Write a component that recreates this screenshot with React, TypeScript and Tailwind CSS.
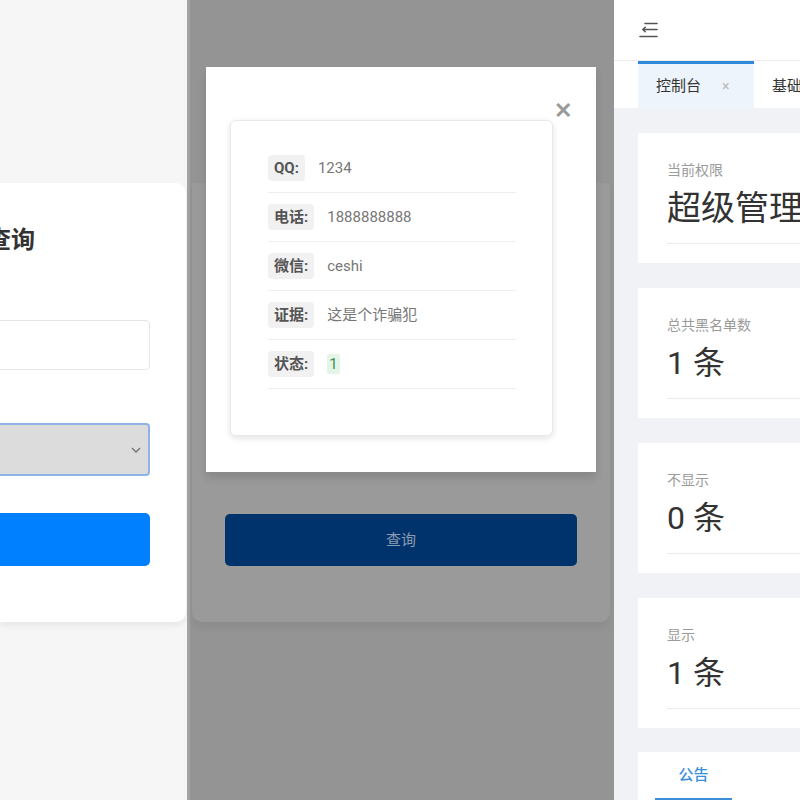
import React from "react";

const font = { fontFamily: 'Roboto, "Noto Sans CJK SC", sans-serif' };

function Row({ label, value, green }: { label: string; value: string; green?: boolean }) {
  return (
    <div className="flex h-[49px] flex-col">
      <div className="flex h-[48px] items-center">
        <span className="rounded-[4px] bg-[#f1f1f1] px-[6px] py-[3px] text-[15px] font-bold leading-[20px] text-[#555]">
          {label}
        </span>
        {green ? (
          <span className="ml-[13px] rounded-[2px] bg-[#e3f5e6] px-[2px] text-[15px] leading-[20px] text-[#3f8f52]">{value}</span>
        ) : (
          <span className="ml-[13px] text-[15px] leading-[20px] text-[#777]">{value}</span>
        )}
      </div>
      <div className="h-px w-[248px] bg-[#efefef]" />
    </div>
  );
}

function StatCard({ label, value, big }: { label: string; value: string; big?: boolean }) {
  return (
    <div className="h-[130px] w-[200px] shrink-0 bg-white pl-[29px] pt-[27px]">
      <div className="text-[14px] leading-[20px] text-[#9a9a9a]">{label}</div>
      <div className={`mt-[8px] whitespace-nowrap leading-[40px] text-[#333] ${big ? "text-[34px]" : "text-[32px]"}`}>{value}</div>
      <div className="mt-[15px] h-px w-full bg-[#ececec]" />
    </div>
  );
}

export default function App() {
  return (
    <div className="flex h-[800px] w-[800px] overflow-hidden bg-white" style={font}>
      {/* Left panel */}
      <div className="flex h-full w-[187px] shrink-0 flex-col bg-[#f6f6f6]">
        <div className="mt-[183px] h-[439px] w-[186px] overflow-hidden rounded-r-[10px] bg-white pt-[40px] shadow-[0_4px_6px_rgba(0,0,0,0.06)]">
          <div className="-ml-[13px] whitespace-nowrap text-[24px] font-bold leading-[34px] text-[#333]">查询</div>
          <div className="-ml-[10px] mt-[63px] h-[50px] w-[160px] rounded-[4px] border border-[#e6e6e6] bg-white" />
          <div className="-ml-[10px] mt-[53px] flex h-[53px] w-[160px] items-center justify-end rounded-[4px] border-2 border-[#8fb4e3] bg-[#dcdcdc] pr-[6px]">
            <svg width="12" height="8" viewBox="0 0 12 8" fill="none" stroke="#777" strokeWidth="1.5">
              <path d="M2 2l4 4 4-4" />
            </svg>
          </div>
          <div className="-ml-[10px] mt-[37px] h-[53px] w-[160px] rounded-[5px] bg-[#0080ff]" />
        </div>
      </div>

      {/* Middle panel (overlay) */}
      <div className="relative h-full w-[427px] shrink-0 border-l-[3px] border-[#a3a3a3] bg-[#949494]">
        <div className="ml-[2px] mt-[183px] flex h-[439px] w-[418px] flex-col rounded-b-[10px] bg-[#9a9a9a] px-[33px] pt-[331px] shadow-[0_6px_6px_rgba(0,0,0,0.05)]">
          <div className="flex h-[52px] w-[352px] items-center justify-center rounded-[5px] bg-[#00336b] text-[15px] text-[#8d9bb2]">
            查询
          </div>
        </div>
        {/* Modal */}
        <div className="absolute left-[16px] top-[67px] h-[405px] w-[390px] bg-white px-[24px] pt-[53px] shadow-[0_6px_8px_rgba(0,0,0,0.12)]">
          <div className="absolute right-[24px] top-[34px] text-[22px] font-bold leading-[20px] text-[#9a9a9a]">✕</div>
          <div className="h-[316px] w-[323px] rounded-[6px] border border-[#e9e9e9] bg-white pl-[37px] pt-[23px] shadow-[0_2px_6px_rgba(0,0,0,0.12)]">
            <Row label="QQ:" value="1234" />
            <Row label="电话:" value="1888888888" />
            <Row label="微信:" value="ceshi" />
            <Row label="证据:" value="这是个诈骗犯" />
            <Row label="状态:" value="1" green />
          </div>
        </div>
      </div>

      {/* Right panel */}
      <div className="flex h-full min-w-0 flex-1 flex-col overflow-hidden bg-[#f0f2f5]">
        <div className="flex h-[61px] shrink-0 items-center border-b border-[#ececec] bg-white pl-[25px]">
          <svg width="19" height="18" viewBox="0 0 19 18" fill="none" stroke="#555" strokeWidth="1.6" strokeLinecap="round">
            <path d="M6 2.5h12" />
            <path d="M4 8.5h14" />
            <path d="M4 8.5l2.2-2.2M4 8.5l2.2 2.2" />
            <path d="M1 15.5h17" />
          </svg>
        </div>
        <div className="flex h-[47px] shrink-0 items-stretch bg-white pl-[24px]">
          <div className="flex w-[116px] shrink-0 items-center border-t-[3px] border-[#2e8bd9] bg-[#eef4fb] pl-[18px]">
            <span className="text-[15px] text-[#333]">控制台</span>
            <span className="ml-[21px] text-[14px] text-[#bbb]">×</span>
          </div>
          <div className="flex items-center whitespace-nowrap pl-[18px] pt-[3px] text-[15px] text-[#333]">基础设置</div>
        </div>
        <div className="flex flex-col gap-[25px] pl-[24px] pt-[25px]">
          <StatCard label="当前权限" value="超级管理员" big />
          <StatCard label="总共黑名单数" value="1 条" />
          <StatCard label="不显示" value="0 条" />
          <StatCard label="显示" value="1 条" />
          <div className="-mt-[1px] h-[60px] w-[200px] shrink-0 bg-white pl-[17px] pt-[11px]">
            <div className="w-[77px] text-center text-[15px] font-medium leading-[24px] text-[#3a8fd8]">公告</div>
            <div className="mt-[11px] h-[3px] w-[77px] bg-[#3a8fd8]" />
          </div>
        </div>
      </div>
    </div>
  );
}
